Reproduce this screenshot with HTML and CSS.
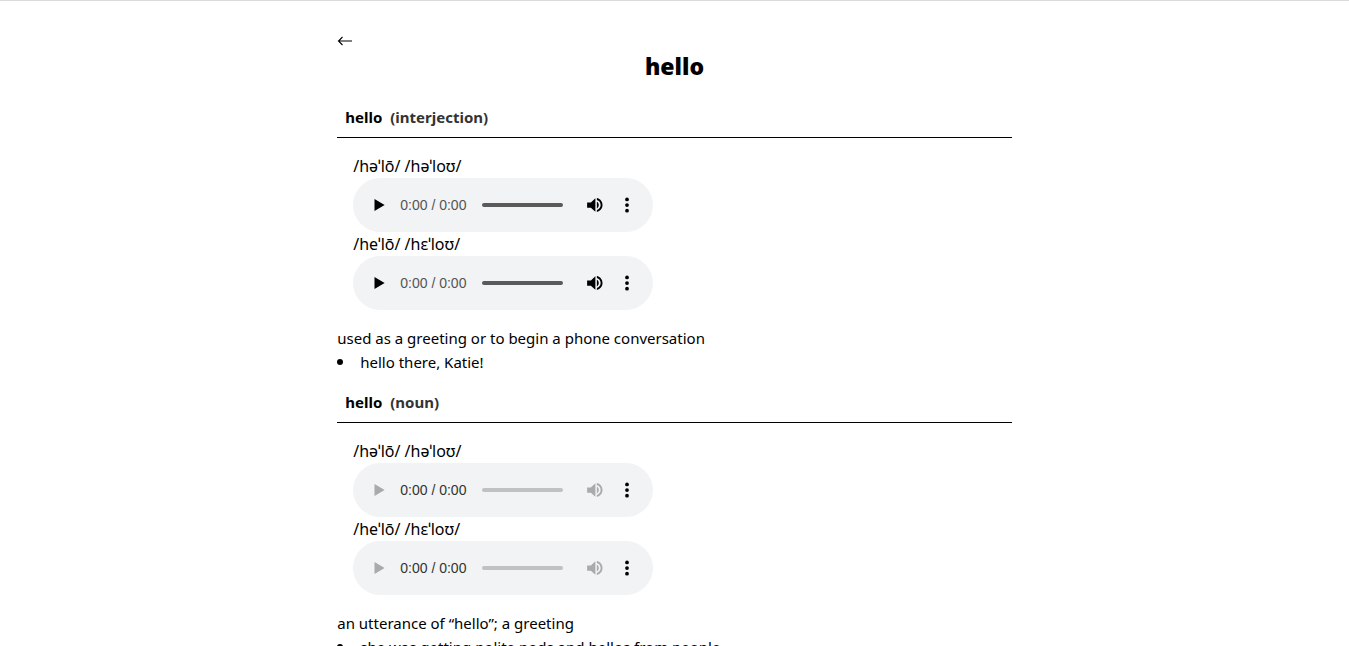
FILE: index.html
```html
<!DOCTYPE html>
<html lang="en">
<head>
<meta charset="utf-8">
<meta name="viewport" content="width=device-width, initial-scale=1">
<title>hello</title>
<link rel="stylesheet" href="styles.css">
</head>
<body>
<svg width="0" height="0" class="sprite" aria-hidden="true">
  <symbol id="play" viewBox="0 0 24 24"><path d="M6 4v16l13.500-8z"/></symbol>
  <symbol id="volume" viewBox="0 0 24 24"><path d="M1.500 8.500v7h5l6 5.500V3l-6 5.500zM14.500 7.500v9c1.700-.8 2.500-2.500 2.500-4.500s-.8-3.700-2.500-4.500zM14.500 2.800v2.600c3 .9 5 3.500 5 6.600s-2 5.700-5 6.600v2.600c4.500-1 7.500-4.700 7.500-9.200S19 3.800 14.500 2.800z"/></symbol>
  <symbol id="more" viewBox="0 0 24 24"><circle cx="12" cy="4.500" r="2.500"/><circle cx="12" cy="12" r="2.500"/><circle cx="12" cy="19.500" r="2.500"/></symbol>
</svg>
<main class="page">
  <a class="back" href="#" aria-label="Back"><svg width="16" height="16" viewBox="0 0 16 16"><path d="M15 8H1.500M5.500 4 1.500 8l4 4"/></svg></a>
  <h1 class="word">hello</h1>

  <section class="entry">
    <h2 class="entry-title">hello <span class="part">(interjection)</span></h2>
    <div class="sounds">
      <p>/həˈlō/ /həˈloʊ/</p>
      <div class="player">
        <button class="icon-button" aria-label="Play"><svg><use href="#play"/></svg></button>
        <span class="time">0:00 / 0:00</span>
        <input class="seek" type="range" value="0" aria-label="Position">
        <button class="icon-button" aria-label="Mute"><svg><use href="#volume"/></svg></button>
        <button class="icon-button" aria-label="More options"><svg><use href="#more"/></svg></button>
      </div>
      <p>/heˈlō/ /hɛˈloʊ/</p>
      <div class="player">
        <button class="icon-button" aria-label="Play"><svg><use href="#play"/></svg></button>
        <span class="time">0:00 / 0:00</span>
        <input class="seek" type="range" value="0" aria-label="Position">
        <button class="icon-button" aria-label="Mute"><svg><use href="#volume"/></svg></button>
        <button class="icon-button" aria-label="More options"><svg><use href="#more"/></svg></button>
      </div>
    </div>
    <p>used as a greeting or to begin a phone conversation</p>
    <ul class="examples"><li>hello there, Katie!</li></ul>
  </section>

  <section class="entry">
    <h2 class="entry-title">hello <span class="part">(noun)</span></h2>
    <div class="sounds">
      <p>/həˈlō/ /həˈloʊ/</p>
      <div class="player">
        <button class="icon-button" aria-label="Play" disabled><svg><use href="#play"/></svg></button>
        <span class="time time-dark">0:00 / 0:00</span>
        <input class="seek" type="range" value="0" aria-label="Position" disabled>
        <button class="icon-button" aria-label="Mute" disabled><svg><use href="#volume"/></svg></button>
        <button class="icon-button" aria-label="More options"><svg><use href="#more"/></svg></button>
      </div>
      <p>/heˈlō/ /hɛˈloʊ/</p>
      <div class="player">
        <button class="icon-button" aria-label="Play" disabled><svg><use href="#play"/></svg></button>
        <span class="time time-dark">0:00 / 0:00</span>
        <input class="seek" type="range" value="0" aria-label="Position" disabled>
        <button class="icon-button" aria-label="Mute" disabled><svg><use href="#volume"/></svg></button>
        <button class="icon-button" aria-label="More options"><svg><use href="#more"/></svg></button>
      </div>
    </div>
    <p>an utterance of “hello”; a greeting</p>
    <ul class="examples"><li>she was getting polite nods and hellos from people</li></ul>
  </section>
</main>
</body>
</html>
```
FILE: styles.css
```css
* {
  box-sizing: border-box;
}

body {
  margin: 0;
  border-top: 1px solid #dadada;
  background: #fff;
  color: #000;
  font: 15px/24px "Segoe UI", "Noto Sans", sans-serif;
}

.sprite {
  position: absolute;
}

.page {
  width: 50%;
  margin: 0 auto;
  padding: 32px 0;
}

.back,
.back svg {
  display: block;
  width: 16px;
}

.back path {
  fill: none;
  stroke: #000;
  stroke-width: 1.1;
}

.word {
  margin: 0 0 22px;
  font-size: 23px;
  font-weight: 900;
  line-height: 34px;
  text-align: center;
}

.entry {
  margin-bottom: 16px;
}

.entry-title {
  display: flex;
  gap: 8px;
  margin: 0 0 16px;
  padding: 0 8px 8px;
  border-bottom: 1px solid #000;
  font-size: 15px;
  font-weight: 700;
}

.part {
  color: #333;
}

.entry p {
  margin: 0;
}

.sounds {
  margin: 0 16px 16px;
  font-size: 16px;
}

.player {
  display: flex;
  align-items: center;
  width: 300px;
  max-width: 100%;
  height: 54px;
  padding: 0 10px;
  border-radius: 27px;
  background: #f1f3f4;
}

.icon-button {
  display: grid;
  place-items: center;
  width: 32px;
  height: 32px;
  padding: 0;
  border: 0;
  background: none;
  color: #000;
}

.icon-button svg {
  width: 18px;
  height: 18px;
  fill: currentColor;
}

.icon-button:disabled {
  color: #aaa;
}

.time {
  margin-left: 5px;
  color: #555;
  font: 14px/20px "Liberation Sans", Arial, sans-serif;
}

.time-dark {
  color: #333;
}

.seek {
  flex: 1;
  min-width: 0;
  height: 4px;
  margin: 0 16px;
  border-radius: 2px;
  background: #5a5a5a;
  appearance: none;
}

.seek:disabled {
  background: #c0c1c2;
}

.seek::-webkit-slider-thumb {
  width: 0;
  height: 0;
  appearance: none;
}

.examples {
  margin: 0;
  padding: 0;
  list-style: none;
}

.examples li {
  display: flex;
  align-items: center;
  gap: 17px;
}

.examples li::before {
  width: 6px;
  height: 6px;
  border-radius: 50%;
  background: #000;
  content: "";
}
```
